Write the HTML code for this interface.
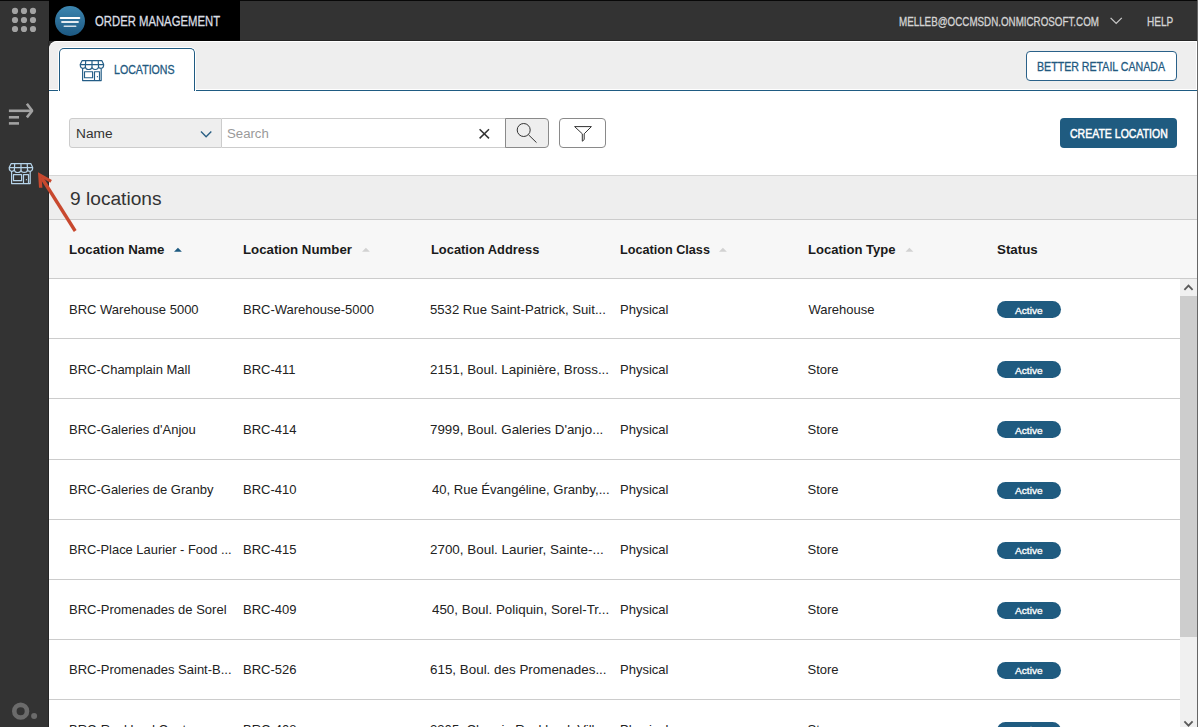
<!DOCTYPE html>
<html><head><meta charset="utf-8"><style>
html,body{margin:0;padding:0}
body{width:1198px;height:727px;overflow:hidden;position:relative;background:#333333;font-family:"Liberation Sans",sans-serif}
.r{position:absolute;box-sizing:border-box}
.t{position:absolute;white-space:nowrap;transform-origin:0 0;font-family:"Liberation Sans",sans-serif}
svg{position:absolute}
</style></head><body>
<div class="r" style="left:0;top:0;width:1198px;height:1px;background:#080808"></div>
<div class="r" style="left:49px;top:0;width:191px;height:41px;background:#000"></div>
<div class="r" style="left:240px;top:40px;width:957px;height:1px;background:#262626"></div>
<div class="r" style="left:48px;top:41px;width:1px;height:686px;background:#262626"></div>
<div class="r" style="left:1197px;top:0;width:1px;height:727px;background:#666"></div>
<!-- logo -->
<svg style="left:55px;top:6px" width="30" height="30" viewBox="0 0 30 30">
<defs><linearGradient id="lg" x1="0" y1="0" x2="0" y2="1"><stop offset="0" stop-color="#3d86b0"/><stop offset="1" stop-color="#1c5882"/></linearGradient></defs>
<circle cx="15" cy="15" r="15" fill="url(#lg)"/>
<line x1="5.7" y1="12" x2="24.3" y2="12" stroke="#fff" stroke-width="2" stroke-linecap="round"/>
<line x1="7" y1="16" x2="23" y2="16" stroke="#e4ecf2" stroke-width="1.8" stroke-linecap="round"/>
<line x1="9.3" y1="20.3" x2="20.7" y2="20.3" stroke="#d2dee8" stroke-width="1.6" stroke-linecap="round"/>
</svg>
<!-- grid dots -->
<svg style="left:0;top:0" width="48" height="40">
<g fill="#a3a3a3">
<circle cx="15" cy="10.9" r="3.1"/><circle cx="24" cy="10.9" r="3.1"/><circle cx="33" cy="10.9" r="3.1"/>
<circle cx="15" cy="20" r="3.1"/><circle cx="24" cy="20" r="3.1"/><circle cx="33" cy="20" r="3.1"/>
<circle cx="15" cy="29" r="3.1"/><circle cx="24" cy="29" r="3.1"/><circle cx="33" cy="29" r="3.1"/>
</g></svg>
<!-- header chevron -->
<svg style="left:1108px;top:14px" width="16" height="12"><polyline points="2.6,3.9 8.2,9.4 13.8,3.9" fill="none" stroke="#c8c8c8" stroke-width="1.3"/></svg>
<!-- sidebar icons -->
<svg style="left:0;top:90px" width="48" height="40">
<g stroke="#a2a2a2" stroke-width="2.6" fill="none">
<line x1="8.9" y1="20.8" x2="31.6" y2="20.8"/>
<polyline points="26.9,13.7 32.2,20.8 26.9,27.4" stroke-linejoin="bevel"/>
<line x1="8.9" y1="27.3" x2="19" y2="27.3"/>
<line x1="8.9" y1="33.4" x2="19" y2="33.4"/>
</g></svg>
<svg style="position:absolute;left:8.8px;top:162.8px;overflow:visible" width="24.0" height="21.5" viewBox="0 0 24 21.5"><path d="M2.2 0.6H21.8L23.7 4.6H0.2ZM0.2 4.6C0.2 7.4 1.3 8.3 2.8 8.3C4.3 8.3 5.4 7.4 5.4 6.2A3.3 3.3 0 0 0 12 6.2A3.25 3.25 0 0 0 18.5 6.2C18.5 7.4 19.6 8.3 21.1 8.3C22.6 8.3 23.7 7.4 23.7 4.6M5.7 0.6L5.4 6.2M12 0.6V6.2M18.2 0.6L18.5 6.2M2.6 8.4V20.6H21.2V8.4M4.5 11.7H12.6V17.7H4.5ZM14.5 20.6V11.7H19.5V20.6" fill="none" stroke="#b6d4ea" stroke-width="1.2" stroke-linejoin="round"/><circle cx="17.4" cy="16.7" r="0.65" fill="#b6d4ea"/></svg>
<svg style="left:0;top:640px" width="48" height="87"><g fill="none"><circle cx="20.65" cy="71.2" r="6.35" stroke="#6b6b6b" stroke-width="4.6"/></g><circle cx="34.1" cy="76" r="3" fill="#6b6b6b"/></svg>
<!-- panel -->
<div class="r" style="left:49px;top:41px;width:1148px;height:686px;background:#fff;border-top-left-radius:8px;overflow:hidden">
  <div class="r" style="left:0;top:0;width:1148px;height:49px;background:#eeeeee;border:1px solid #fff;border-left:none;border-top-left-radius:8px"></div>
  <div class="r" style="left:0;top:49px;width:1148px;height:1px;background:#1f5b82"></div>
</div>
<div class="r" style="left:59px;top:48px;width:136px;height:43px;background:#fff;border:1px solid #1f5b82;border-bottom:none;border-radius:5px 5px 0 0;box-shadow:0 0 0 1px #fff"></div>
<svg style="position:absolute;left:80px;top:59.7px;overflow:visible" width="24.0" height="21.5" viewBox="0 0 24 21.5"><path d="M2.2 0.6H21.8L23.7 4.6H0.2ZM0.2 4.6C0.2 7.4 1.3 8.3 2.8 8.3C4.3 8.3 5.4 7.4 5.4 6.2A3.3 3.3 0 0 0 12 6.2A3.25 3.25 0 0 0 18.5 6.2C18.5 7.4 19.6 8.3 21.1 8.3C22.6 8.3 23.7 7.4 23.7 4.6M5.7 0.6L5.4 6.2M12 0.6V6.2M18.2 0.6L18.5 6.2M2.6 8.4V20.6H21.2V8.4M4.5 11.7H12.6V17.7H4.5ZM14.5 20.6V11.7H19.5V20.6" fill="none" stroke="#235d86" stroke-width="1.15" stroke-linejoin="round"/><circle cx="17.4" cy="16.7" r="0.65" fill="#235d86"/></svg>
<div class="r" style="left:1026px;top:51px;width:151px;height:30px;background:#fff;border:1px solid #2a6189;border-radius:4px"></div>
<!-- search row -->
<div class="r" style="left:69px;top:118px;width:153px;height:30px;background:#eeeeee;border:1px solid #cccccc;border-radius:3px 0 0 3px"></div>
<div class="r" style="left:222px;top:118px;width:284px;height:30px;background:#fff;border:1px solid #cccccc;border-left:none;border-right:none"></div>
<div class="r" style="left:505px;top:118px;width:44px;height:30px;background:#eeeeee;border:1px solid #8a8a8a;border-radius:0 4px 4px 0"></div>
<div class="r" style="left:559px;top:118px;width:47px;height:30px;background:#fff;border:1px solid #8a8a8a;border-radius:4px"></div>
<div class="r" style="left:1060px;top:118px;width:117px;height:30px;background:#1f5b80;border-radius:4px"></div>
<svg style="left:0;top:100px" width="620" height="60">
<polyline points="201,31.6 206.1,36.8 211.3,31.6" fill="none" stroke="#2a5f84" stroke-width="1.4"/>
<g stroke="#333" stroke-width="1.5"><line x1="479.6" y1="29.2" x2="489" y2="38.4"/><line x1="489" y1="29.2" x2="479.6" y2="38.4"/></g>
<circle cx="523.7" cy="30" r="6.5" fill="none" stroke="#333" stroke-width="1"/>
<line x1="528.4" y1="34.7" x2="536.5" y2="42.6" stroke="#333" stroke-width="1"/>
<path d="M574.6 26.6H591.4L584.2 33.8V39.6L582.3 41.2V33.8Z" fill="none" stroke="#333" stroke-width="1" stroke-linejoin="miter"/>
</svg>
<!-- count band -->
<div class="r" style="left:49px;top:175px;width:1148px;height:45px;background:#eeeeee;border-top:1px solid #d6d6d6;border-bottom:1px solid #cccccc"></div>
<div class="r" style="left:49px;top:220px;width:1148px;height:58px;background:#f7f7f7"></div>
<div class="r" style="left:49px;top:278px;width:1148px;height:1px;background:#cccccc"></div>
<svg style="left:0;top:240px" width="1000" height="20">
<polygon points="174,11.7 177.95,7.7 181.9,11.7" fill="#1d5a80"/>
<polygon points="362,11.7 365.95,7.7 369.9,11.7" fill="#d2d2d2"/>
<polygon points="719,11.7 722.95,7.7 726.9,11.7" fill="#d2d2d2"/>
<polygon points="905.5,11.7 909.45,7.7 913.4,11.7" fill="#d2d2d2"/>
</svg>
<div class="r" style="left:49px;top:338px;width:1131px;height:1px;background:#cccccc"></div><div class="r" style="left:49px;top:398px;width:1131px;height:1px;background:#cccccc"></div><div class="r" style="left:49px;top:459px;width:1131px;height:1px;background:#cccccc"></div><div class="r" style="left:49px;top:519px;width:1131px;height:1px;background:#cccccc"></div><div class="r" style="left:49px;top:579px;width:1131px;height:1px;background:#cccccc"></div><div class="r" style="left:49px;top:639px;width:1131px;height:1px;background:#cccccc"></div><div class="r" style="left:49px;top:699px;width:1131px;height:1px;background:#cccccc"></div>
<div class="r" style="left:997px;top:301px;width:64px;height:17px;border-radius:9px;background:#1f5b80"></div><div class="r" style="left:997px;top:361px;width:64px;height:17px;border-radius:9px;background:#1f5b80"></div><div class="r" style="left:997px;top:421px;width:64px;height:17px;border-radius:9px;background:#1f5b80"></div><div class="r" style="left:997px;top:482px;width:64px;height:17px;border-radius:9px;background:#1f5b80"></div><div class="r" style="left:997px;top:542px;width:64px;height:17px;border-radius:9px;background:#1f5b80"></div><div class="r" style="left:997px;top:602px;width:64px;height:17px;border-radius:9px;background:#1f5b80"></div><div class="r" style="left:997px;top:662px;width:64px;height:17px;border-radius:9px;background:#1f5b80"></div><div class="r" style="left:997px;top:722px;width:64px;height:17px;border-radius:9px;background:#1f5b80"></div>
<!-- scrollbar -->
<div class="r" style="left:1180px;top:279px;width:17px;height:448px;background:#f0f0f0"></div>
<div class="r" style="left:1180px;top:296px;width:17px;height:341px;background:#cdcdcd"></div>
<svg style="left:1180px;top:279px" width="17" height="448">
<polyline points="4.4,10.8 8.5,6.6 12.6,10.8" fill="none" stroke="#5a5a5a" stroke-width="1.8"/>
<polyline points="4.4,442.4 8.5,446.6 12.6,442.4" fill="none" stroke="#5a5a5a" stroke-width="1.8"/>
</svg>
<div class="t" style="left:94.79px;top:13.7px;font-size:14px;line-height:14px;color:#d9dde2;transform:scaleX(0.8078);-webkit-text-stroke:0.3px #d9dde2">ORDER MANAGEMENT</div><div class="t" style="left:899.48px;top:15.5px;font-size:12px;line-height:12px;color:#d4d4d4;transform:scaleX(0.8165);-webkit-text-stroke:0.3px #d4d4d4">MELLEB@OCCMSDN.ONMICROSOFT.COM</div><div class="t" style="left:1146.66px;top:15.5px;font-size:12px;line-height:12px;color:#d4d4d4;transform:scaleX(0.8367);-webkit-text-stroke:0.3px #d4d4d4">HELP</div><div class="t" style="left:113.85px;top:63.8px;font-size:12.5px;line-height:12.5px;color:#22597f;transform:scaleX(0.85);-webkit-text-stroke:0.3px #22597f">LOCATIONS</div><div class="t" style="left:1036.88px;top:60.1px;font-size:13px;line-height:13px;color:#22597f;transform:scaleX(0.8173);-webkit-text-stroke:0.3px #22597f">BETTER RETAIL CANADA</div><div class="t" style="left:1069.86px;top:128.0px;font-size:12.5px;line-height:12.5px;color:#ffffff;transform:scaleX(0.8412);-webkit-text-stroke:0.5px #ffffff">CREATE LOCATION</div><div class="t" style="left:75.8px;top:127.9px;font-size:12.5px;line-height:12.5px;color:#333333;transform:scaleX(1.0969)">Name</div><div class="t" style="left:226.94px;top:127.9px;font-size:12.5px;line-height:12.5px;color:#9a9a9a;transform:scaleX(1.0553)">Search</div><div class="t" style="left:69.54px;top:190.0px;font-size:18px;line-height:18px;color:#333333;transform:scaleX(1.0643)">9 locations</div><div class="t" style="left:68.98px;top:242.8px;font-size:13px;line-height:13px;color:#1a1a1a;font-weight:700;transform:scaleX(1.0239)">Location Name</div><div class="t" style="left:242.98px;top:242.8px;font-size:13px;line-height:13px;color:#1a1a1a;font-weight:700;transform:scaleX(1.0189)">Location Number</div><div class="t" style="left:431.01px;top:242.8px;font-size:13px;line-height:13px;color:#1a1a1a;font-weight:700;transform:scaleX(0.9907)">Location Address</div><div class="t" style="left:619.83px;top:242.8px;font-size:13px;line-height:13px;color:#1a1a1a;font-weight:700;transform:scaleX(0.9725)">Location Class</div><div class="t" style="left:808.3px;top:242.8px;font-size:13px;line-height:13px;color:#1a1a1a;font-weight:700;transform:scaleX(1.0035)">Location Type</div><div class="t" style="left:996.57px;top:242.8px;font-size:13px;line-height:13px;color:#1a1a1a;font-weight:700;transform:scaleX(1.0263)">Status</div><div class="t" style="left:69.0px;top:303px;font-size:13px;line-height:13px;color:#222222">BRC Warehouse 5000</div><div class="t" style="left:243.0px;top:303px;font-size:13px;line-height:13px;color:#222222">BRC-Warehouse-5000</div><div class="t" style="left:430.49px;top:303px;font-size:13px;line-height:13px;color:#222222;transform:scaleX(1.0099)">5532 Rue Saint-Patrick, Suit...</div><div class="t" style="left:620.0px;top:303px;font-size:13px;line-height:13px;color:#222222">Physical</div><div class="t" style="left:808.5px;top:303px;font-size:13px;line-height:13px;color:#222222">Warehouse</div><div class="t" style="left:1015.3px;top:306px;font-size:9.6px;line-height:9.6px;color:#ffffff;transform:scaleX(1.0577);-webkit-text-stroke:0.3px #ffffff">Active</div><div class="t" style="left:69.0px;top:363px;font-size:13px;line-height:13px;color:#222222">BRC-Champlain Mall</div><div class="t" style="left:243.0px;top:363px;font-size:13px;line-height:13px;color:#222222">BRC-411</div><div class="t" style="left:430.47px;top:363px;font-size:13px;line-height:13px;color:#222222;transform:scaleX(1.0279)">2151, Boul. Lapinière, Bross...</div><div class="t" style="left:620.0px;top:363px;font-size:13px;line-height:13px;color:#222222">Physical</div><div class="t" style="left:807.5px;top:363px;font-size:13px;line-height:13px;color:#222222">Store</div><div class="t" style="left:1015.3px;top:366px;font-size:9.6px;line-height:9.6px;color:#ffffff;transform:scaleX(1.0577);-webkit-text-stroke:0.3px #ffffff">Active</div><div class="t" style="left:69.0px;top:423px;font-size:13px;line-height:13px;color:#222222">BRC-Galeries d'Anjou</div><div class="t" style="left:243.0px;top:423px;font-size:13px;line-height:13px;color:#222222">BRC-414</div><div class="t" style="left:430.47px;top:423px;font-size:13px;line-height:13px;color:#222222;transform:scaleX(1.0275)">7999, Boul. Galeries D'anjo...</div><div class="t" style="left:620.0px;top:423px;font-size:13px;line-height:13px;color:#222222">Physical</div><div class="t" style="left:807.5px;top:423px;font-size:13px;line-height:13px;color:#222222">Store</div><div class="t" style="left:1015.3px;top:426px;font-size:9.6px;line-height:9.6px;color:#ffffff;transform:scaleX(1.0577);-webkit-text-stroke:0.3px #ffffff">Active</div><div class="t" style="left:69.0px;top:483px;font-size:13px;line-height:13px;color:#222222">BRC-Galeries de Granby</div><div class="t" style="left:243.0px;top:483px;font-size:13px;line-height:13px;color:#222222">BRC-410</div><div class="t" style="left:431.5px;top:483px;font-size:13px;line-height:13px;color:#222222;transform:scaleX(1.0045)">40, Rue Évangéline, Granby,...</div><div class="t" style="left:620.0px;top:483px;font-size:13px;line-height:13px;color:#222222">Physical</div><div class="t" style="left:807.5px;top:483px;font-size:13px;line-height:13px;color:#222222">Store</div><div class="t" style="left:1015.3px;top:486px;font-size:9.6px;line-height:9.6px;color:#ffffff;transform:scaleX(1.0577);-webkit-text-stroke:0.3px #ffffff">Active</div><div class="t" style="left:69.01px;top:543px;font-size:13px;line-height:13px;color:#222222;transform:scaleX(0.992)">BRC-Place Laurier - Food ...</div><div class="t" style="left:243.0px;top:543px;font-size:13px;line-height:13px;color:#222222">BRC-415</div><div class="t" style="left:430.47px;top:543px;font-size:13px;line-height:13px;color:#222222;transform:scaleX(1.0313)">2700, Boul. Laurier, Sainte-...</div><div class="t" style="left:620.0px;top:543px;font-size:13px;line-height:13px;color:#222222">Physical</div><div class="t" style="left:807.5px;top:543px;font-size:13px;line-height:13px;color:#222222">Store</div><div class="t" style="left:1015.3px;top:546px;font-size:9.6px;line-height:9.6px;color:#ffffff;transform:scaleX(1.0577);-webkit-text-stroke:0.3px #ffffff">Active</div><div class="t" style="left:69.0px;top:603px;font-size:13px;line-height:13px;color:#222222">BRC-Promenades de Sorel</div><div class="t" style="left:243.0px;top:603px;font-size:13px;line-height:13px;color:#222222">BRC-409</div><div class="t" style="left:431.5px;top:603px;font-size:13px;line-height:13px;color:#222222;transform:scaleX(1.0287)">450, Boul. Poliquin, Sorel-Tr...</div><div class="t" style="left:620.0px;top:603px;font-size:13px;line-height:13px;color:#222222">Physical</div><div class="t" style="left:807.5px;top:603px;font-size:13px;line-height:13px;color:#222222">Store</div><div class="t" style="left:1015.3px;top:606px;font-size:9.6px;line-height:9.6px;color:#ffffff;transform:scaleX(1.0577);-webkit-text-stroke:0.3px #ffffff">Active</div><div class="t" style="left:69.0px;top:663px;font-size:13px;line-height:13px;color:#222222">BRC-Promenades Saint-B...</div><div class="t" style="left:243.0px;top:663px;font-size:13px;line-height:13px;color:#222222">BRC-526</div><div class="t" style="left:430.47px;top:663px;font-size:13px;line-height:13px;color:#222222;transform:scaleX(1.0308)">615, Boul. des Promenades...</div><div class="t" style="left:620.0px;top:663px;font-size:13px;line-height:13px;color:#222222">Physical</div><div class="t" style="left:807.5px;top:663px;font-size:13px;line-height:13px;color:#222222">Store</div><div class="t" style="left:1015.3px;top:666px;font-size:9.6px;line-height:9.6px;color:#ffffff;transform:scaleX(1.0577);-webkit-text-stroke:0.3px #ffffff">Active</div><div class="t" style="left:69.0px;top:723px;font-size:13px;line-height:13px;color:#222222">BRC-Rockland Centre</div><div class="t" style="left:243.0px;top:723px;font-size:13px;line-height:13px;color:#222222">BRC-408</div><div class="t" style="left:430.49px;top:723px;font-size:13px;line-height:13px;color:#222222;transform:scaleX(1.0087)">2305, Chemin Rockland, Vill...</div><div class="t" style="left:620.0px;top:723px;font-size:13px;line-height:13px;color:#222222">Physical</div><div class="t" style="left:807.5px;top:723px;font-size:13px;line-height:13px;color:#222222">Store</div><div class="t" style="left:1015.3px;top:726px;font-size:9.6px;line-height:9.6px;color:#ffffff;transform:scaleX(1.0577);-webkit-text-stroke:0.3px #ffffff">Active</div>
<!-- annotation arrow -->
<svg style="left:0;top:0" width="1198" height="727">
<line x1="75.2" y1="231" x2="41.5" y2="177.5" stroke="#c8482e" stroke-width="3.3"/>
<polygon points="38,172.2 51.9,180 50.3,182.8 41.6,177.6 42.4,187.8 39,187.8" fill="#c8482e"/>
</svg>
</body></html>
